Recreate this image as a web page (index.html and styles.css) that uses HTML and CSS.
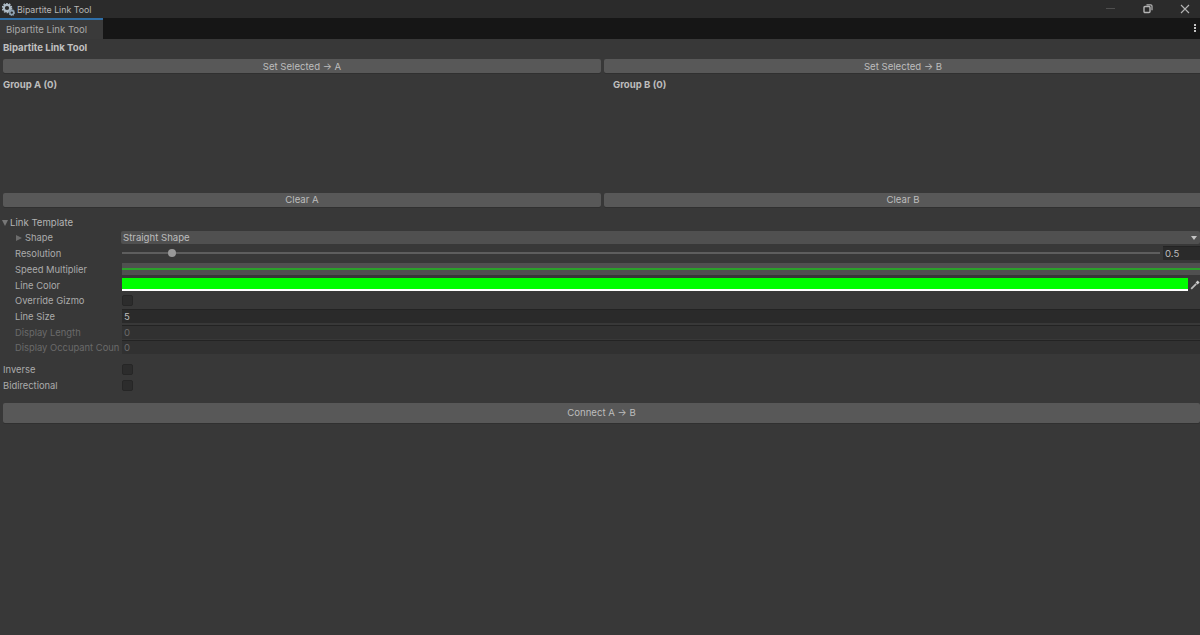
FILE: index.html
```html
<!DOCTYPE html>
<html lang="en">
<head>
    <meta charset="UTF-8">
    <title>Bipartite Link Tool</title>
    <link rel="stylesheet" href="styles.css">
</head>
<body>
    <div class="titlebar">
        <svg class="app-icon" width="13" height="13" viewBox="0 0 13 13">
            <circle cx="5" cy="5" r="3.2" fill="none" stroke="#aebbc6" stroke-width="2.2"/>
            <circle cx="5" cy="5" r="4.6" fill="none" stroke="#aebbc6" stroke-width="1.4" stroke-dasharray="1.6 1.3"/>
            <circle cx="9.8" cy="9.6" r="2" fill="none" stroke="#8fa3b3" stroke-width="1.6"/>
            <circle cx="9.8" cy="9.6" r="3" fill="none" stroke="#8fa3b3" stroke-width="1" stroke-dasharray="1.2 1"/>
        </svg>
        <span class="app-title">Bipartite Link Tool</span>
        <div class="window-buttons">
            <svg width="12" height="12" viewBox="0 0 12 12"><path d="M1 5.5h9" stroke="#4f4f4f" stroke-width="1"/></svg>
            <svg width="12" height="12" viewBox="0 0 12 12"><rect x="2" y="3.5" width="6" height="6" rx="1" fill="none" stroke="#b4b4b4" stroke-width="1.4"/><path d="M4.5 1.8h4.2a1.3 1.3 0 0 1 1.3 1.3v4.2" fill="none" stroke="#b4b4b4" stroke-width="1.2"/></svg>
            <svg width="12" height="12" viewBox="0 0 12 12"><path d="M2 2l8 8M10 2l-8 8" stroke="#b4b4b4" stroke-width="1.1"/></svg>
        </div>
    </div>

    <div class="tabstrip">
        <div class="tab">Bipartite Link Tool</div>
        <div class="tab-menu"><i></i><i></i><i></i></div>
    </div>

    <div class="content">
        <div class="heading">Bipartite Link Tool</div>

        <div class="two-col">
            <div class="col">
                <button class="btn">Set Selected → A</button>
                <div class="group-label">Group A (0)</div>
                <button class="btn btn-clear">Clear A</button>
            </div>
            <div class="col">
                <button class="btn">Set Selected → B</button>
                <div class="group-label group-b">Group B (0)</div>
                <button class="btn btn-clear">Clear B</button>
            </div>
        </div>

        <div class="foldout">
            <span class="arrow-down"></span>Link Template
        </div>

        <div class="props">
            <div class="row">
                <label class="shape-label"><span class="arrow-right"></span>Shape</label>
                <div class="dropdown">Straight Shape<span class="dropdown-arrow"></span></div>
            </div>
            <div class="row">
                <label>Resolution</label>
                <div class="slider">
                    <div class="track"><span class="thumb"></span></div>
                    <div class="field slider-value">0.5</div>
                </div>
            </div>
            <div class="row">
                <label>Speed Multiplier</label>
                <div class="curve"><span></span></div>
            </div>
            <div class="row">
                <label>Line Color</label>
                <div class="color-wrap">
                    <div class="color"><span class="color-fill"></span><span class="color-alpha"></span></div>
                    <svg class="picker" width="10" height="10" viewBox="0 0 10 10"><path d="M1.2 8.8l5-5" stroke="#bdbdbd" stroke-width="1.8"/><path d="M5.6 2.4l2-2 2 2-2 2z" fill="#cfcfcf"/></svg>
                </div>
            </div>
            <div class="row">
                <label>Override Gizmo</label>
                <span class="check"></span>
            </div>
            <div class="row">
                <label>Line Size</label>
                <div class="field">5</div>
            </div>
            <div class="row disabled">
                <label>Display Length</label>
                <div class="field">0</div>
            </div>
            <div class="row disabled">
                <label>Display Occupant Coun</label>
                <div class="field">0</div>
            </div>
        </div>

        <div class="options">
            <div class="row">
                <label>Inverse</label>
                <span class="check"></span>
            </div>
            <div class="row">
                <label>Bidirectional</label>
                <span class="check"></span>
            </div>
        </div>

        <button class="btn connect">Connect A → B</button>
    </div>
</body>
</html>
```

FILE: styles.css
```css
* {
    box-sizing: border-box;
}
html, body {
    height: 100%;
}
body {
    margin: 0;
    overflow: hidden;
    background: #383838;
    color: #bdbdbd;
    font-family: Inter, "Liberation Sans", sans-serif;
    font-size: 9.6px;
    line-height: 14px;
}
.titlebar {
    height: 18px;
    background: #2b2b2b;
    display: flex;
    align-items: center;
    padding-left: 2px;
}
.app-title {
    margin-left: 2px;
    padding-top: 1px;
    font-size: 8.8px;
    color: #b8b8b8;
}
.window-buttons {
    margin-left: auto;
    display: flex;
    gap: 25px;
    padding-right: 9px;
}
.tabstrip {
    height: 21px;
    background: #161616;
    display: flex;
    justify-content: space-between;
}
.tab {
    width: 103px;
    background: #3a3a3a;
    border-top: 2px solid #2f6fa8;
    padding: 3px 0 0 6px;
    color: #a8a8a8;
}
.tab-menu {
    display: flex;
    flex-direction: column;
    gap: 1px;
    padding: 6px 4px 0 0;
}
.tab-menu i {
    width: 2px;
    height: 2px;
    background: #c4c4c4;
}
.content {
    padding: 1px 0 0 3px;
}
.heading {
    font-weight: 700;
    height: 19px;
    padding-top: 1px;
    color: #c0c0c0;
}
.two-col {
    display: flex;
    gap: 3px;
    margin-right: -2px;
}
.col {
    flex: 1;
    min-width: 0;
}
.btn {
    display: block;
    width: 100%;
    height: 14px;
    padding: 1px 0 0;
    border: 0;
    border-radius: 2px;
    background: #585858;
    box-shadow: 0 1px 0 #303030;
    color: #bdbdbd;
    font: inherit;
    text-align: center;
}
.btn-clear {
    padding-top: 0;
}
.group-label {
    height: 120px;
    padding-top: 5px;
    font-weight: 700;
}
.group-b {
    padding-left: 9px;
}
.foldout {
    margin-top: 8px;
    height: 15px;
    display: flex;
    align-items: center;
    margin-left: -1px;
    color: #b4b4b4;
}
.arrow-down {
    width: 0;
    height: 0;
    margin-right: 2px;
    border-left: 3.5px solid transparent;
    border-right: 3.5px solid transparent;
    border-top: 6px solid #777;
}
.arrow-right {
    display: inline-block;
    width: 0;
    height: 0;
    margin: 0 3px 0 1px;
    border-top: 3.5px solid transparent;
    border-bottom: 3.5px solid transparent;
    border-left: 6px solid #6c6c6c;
}
.props {
    padding-left: 12px;
    display: flex;
    flex-direction: column;
    gap: 0.7px;
}
.row {
    height: 15px;
    display: flex;
    align-items: center;
}
.row label {
    width: 107px;
    height: 15px;
    padding-top: 1.5px;
    flex: none;
    font-size: 9.4px;
    white-space: nowrap;
    color: #ababab;
}
.shape-label {
    display: flex;
    align-items: center;
}
.dropdown {
    flex: 1;
    height: 13px;
    line-height: 13px;
    position: relative;
    padding-left: 2px;
    margin-left: -1px;
    background: #505050;
    border-radius: 2px;
    color: #bdbdbd;
}
.dropdown-arrow {
    position: absolute;
    right: 3px;
    top: 5px;
    border-left: 3px solid transparent;
    border-right: 3px solid transparent;
    border-top: 4px solid #c4c4c4;
}
.slider {
    flex: 1;
    display: flex;
    align-items: center;
}
.track {
    flex: 1;
    height: 2px;
    background: #5e5e5e;
    position: relative;
}
.thumb {
    position: absolute;
    left: 46px;
    top: -3px;
    width: 8px;
    height: 8px;
    border-radius: 50%;
    background: #999;
}
.field {
    flex: 1;
    height: 14px;
    line-height: 14px;
    padding-left: 2px;
    background: #2a2a2a;
    border-top: 1px solid #232323;
    color: #bdbdbd;
}
.slider-value {
    flex: none;
    width: 37px;
    margin-left: 3px;
}
.disabled label,
.disabled .field {
    color: #6a6a6a;
}
.disabled .field {
    background: #313131;
}
.curve {
    flex: 1;
    height: 12px;
    background: #505050;
    display: flex;
    align-items: center;
}
.curve span {
    flex: 1;
    height: 2px;
    background: #2ca02c;
}
.color-wrap {
    flex: 1;
    display: flex;
    align-items: center;
}
.color {
    flex: 1;
    height: 13px;
    display: flex;
    flex-direction: column;
}
.color-fill {
    flex: 1;
    background: #00ff00;
}
.color-alpha {
    flex: none;
    height: 2px;
    background: #ffffff;
}
.picker {
    flex: none;
    margin-left: 2px;
}
.check {
    width: 11px;
    height: 11px;
    border-radius: 2px;
    background: #2c2c2c;
    border: 1px solid #262626;
}
.options {
    margin-top: 7px;
    display: flex;
    flex-direction: column;
    gap: 0.7px;
}
.options label {
    width: 119px;
}
.connect {
    margin-top: 10px;
    height: 20px;
}
```
